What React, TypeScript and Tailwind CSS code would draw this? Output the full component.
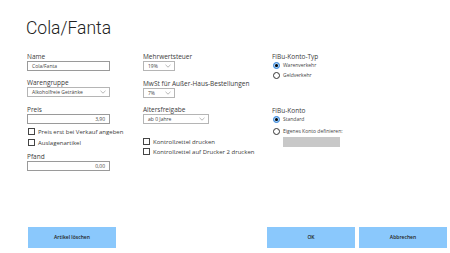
import { ReactNode } from "react";

function Label({ children, className = "" }: { children: ReactNode; className?: string }) {
  return <div className={`text-[6.5px] leading-[8px] text-[#3a3a3a] ${className}`}>{children}</div>;
}

function TextBox({ value, align = "left", width = "w-[83px]" }: { value: string; align?: "left" | "right"; width?: string }) {
  return (
    <div
      className={`${width} h-[10px] border border-[#9a9a9a] bg-white px-[4px] flex items-center text-[5px] leading-none text-[#444] ${
        align === "right" ? "justify-end" : "justify-start"
      }`}
    >
      {value}
    </div>
  );
}

function Select({ value, width }: { value: string; width: string }) {
  return (
    <div className={`${width} h-[10px] border border-[#b5b5b5] bg-white pl-[4px] pr-[3px] flex items-center justify-between text-[5px] leading-none text-[#444]`}>
      <span>{value}</span>
      <svg width="6" height="4" viewBox="0 0 6 4">
        <path d="M0.5 0.8 L3 3.2 L5.5 0.8" fill="none" stroke="#9a9a9a" strokeWidth="0.7" />
      </svg>
    </div>
  );
}

function Check({ label }: { label: string }) {
  return (
    <div className="flex items-center gap-[3px] h-[7px]">
      <div className="w-[7px] h-[7px] border border-[#444] bg-white" />
      <span className="text-[6px] leading-none text-[#3a3a3a]">{label}</span>
    </div>
  );
}

function Radio({ label, checked }: { label: string; checked?: boolean }) {
  return (
    <div className="flex items-center gap-[3px] h-[7px]">
      {checked ? (
        <div className="w-[7px] h-[7px] rounded-full border border-[#2d7fd6] bg-[#a9d2f7] flex items-center justify-center">
          <div className="w-[3px] h-[3px] rounded-full bg-black" />
        </div>
      ) : (
        <div className="w-[7px] h-[7px] rounded-full border border-[#333] bg-white" />
      )}
      <span className="text-[5px] leading-none text-[#444]">{label}</span>
    </div>
  );
}

function ActionButton({ label }: { label: string }) {
  return (
    <button className="w-[88px] h-[21px] bg-[#8ac8fc] text-[5px] font-semibold text-[#222]">
      {label}
    </button>
  );
}

export default function App() {
  return (
    <div className="w-[450px] h-[253px] bg-white flex flex-col font-['Open_Sans',sans-serif] overflow-hidden">
      <div className="pl-[26px] pt-[17px] text-[17.5px] leading-[22px] font-light font-['Roboto',sans-serif] text-[#222]">
        Cola/Fanta
      </div>

      <div className="flex pl-[27px] pt-[14px]">
        {/* Spalte 1 */}
        <div className="w-[116px] flex flex-col">
          <Label>Name</Label>
          <TextBox value="Cola/Fanta" />
          <Label className="mt-[8px]">Warengruppe</Label>
          <Select value="Alkoholfreie Getränke" width="w-[83px]" />
          <Label className="mt-[9px]">Preis</Label>
          <TextBox value="3,90" align="right" />
          <div className="mt-[4px] flex flex-col gap-[4px] pl-[1px]">
            <Check label="Preis erst bei Verkauf angeben" />
            <Check label="Auslagenartikel" />
          </div>
          <Label className="mt-[7px]">Pfand</Label>
          <TextBox value="0,00" align="right" />
        </div>

        {/* Spalte 2 */}
        <div className="w-[129px] flex flex-col">
          <Label>Mehrwertsteuer</Label>
          <Select value="19%" width="w-[32px]" />
          <Label className="mt-[9px]">MwSt für Außer-Haus-Bestellungen</Label>
          <Select value="7%" width="w-[32px]" />
          <Label className="mt-[8px]">Altersfreigabe</Label>
          <Select value="ab 0 Jahre" width="w-[66px]" />
          <div className="mt-[14px] flex flex-col gap-[3px]">
            <Check label="Kontrollzettel drucken" />
            <Check label="Kontrollzettel auf Drucker 2 drucken" />
          </div>
        </div>

        {/* Spalte 3 */}
        <div className="flex flex-col">
          <Label>FiBu-Konto-Typ</Label>
          <div className="mt-[1px] pl-[1px] flex flex-col gap-[3px]">
            <Radio label="Warenverkehr" checked />
            <Radio label="Geldverkehr" />
          </div>
          <Label className="mt-[28px]">FiBu-Konto</Label>
          <div className="mt-[1px] pl-[1px] flex flex-col gap-[5px]">
            <Radio label="Standard" checked />
            <Radio label="Eigenes Konto definieren:" />
          </div>
          <div className="ml-[11px] mt-[2px] w-[57px] h-[10px] bg-[#c8c8c8]" />
        </div>
      </div>

      <div className="mt-auto mb-[5px] flex pl-[28px] pr-[3px]">
        <ActionButton label="Artikel löschen" />
        <div className="flex-1" />
        <div className="flex gap-[4px]">
          <ActionButton label="OK" />
          <ActionButton label="Abbrechen" />
        </div>
      </div>
    </div>
  );
}
